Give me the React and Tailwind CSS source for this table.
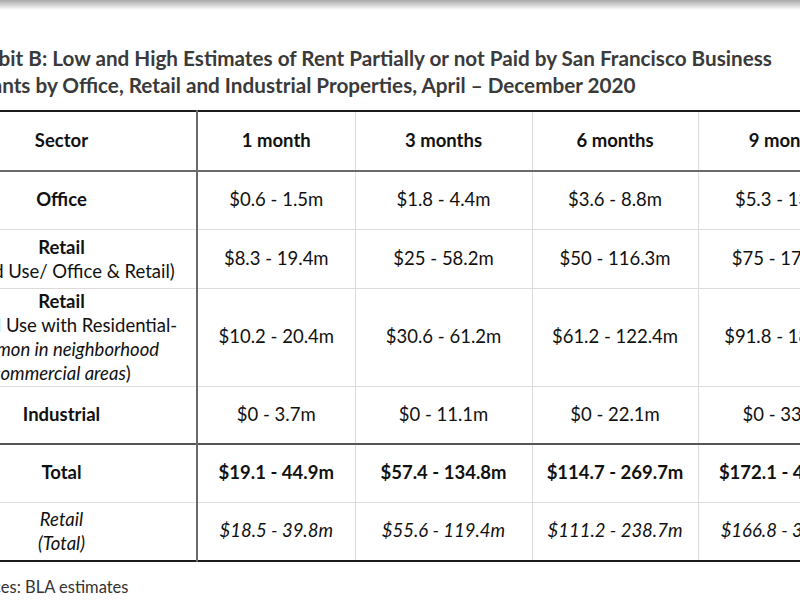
import React from "react";

const rows = [
  { key: "office", h: "h-[58px]", values: ["$0.6 - 1.5m", "$1.8 - 4.4m", "$3.6 - 8.8m", "$5.3 - 13.2m"] },
  { key: "retail", h: "h-[59px]", values: ["$8.3 - 19.4m", "$25 - 58.2m", "$50 - 116.3m", "$75 - 174.5m"] },
  { key: "mixed", h: "h-[98px]", values: ["$10.2 - 20.4m", "$30.6 - 61.2m", "$61.2 - 122.4m", "$91.8 - 183.6m"] },
  { key: "industrial", h: "h-[58px]", values: ["$0 - 3.7m", "$0 - 11.1m", "$0 - 22.1m", "$0 - 33.2m"] },
];

const totals = ["$19.1 - 44.9m", "$57.4 - 134.8m", "$114.7 - 269.7m", "$172.1 - 404.6m"];
const retailTotals = ["$18.5 - 39.8m", "$55.6 - 119.4m", "$111.2 - 238.7m", "$166.8 - 358.1m"];

const SectorCell = ({ k }) => {
  if (k === "office") return <span className="font-bold">Office</span>;
  if (k === "industrial") return <span className="font-bold">Industrial</span>;
  if (k === "retail")
    return (
      <div className="leading-[24px]">
        <div className="font-bold">Retail</div>
        <div className="whitespace-nowrap">(Mixed Use/ Office &amp; Retail)</div>
      </div>
    );
  return (
    <div className="leading-[24px]">
      <div className="font-bold">Retail</div>
      <div className="whitespace-nowrap">(Mixed Use with Residential-</div>
      <div className="whitespace-nowrap italic">common in neighborhood</div>
      <div className="whitespace-nowrap">
        <span className="italic">commercial areas</span>)
      </div>
    </div>
  );
};

export default function App() {
  return (
    <div
      className="w-[800px] h-[600px] overflow-hidden bg-white text-[#111]"
      style={{ fontFamily: "Lato, 'Open Sans', sans-serif" }}
    >
      <div className="h-[10px] bg-gradient-to-b from-[#a9a9a9] to-white" />

      <h1 className="-ml-[41px] mt-[35px] text-[20.7px] leading-[27px] font-bold text-[#3a3a3a] whitespace-nowrap">
        <div>Exhibit B: Low and High Estimates of Rent Partially or not Paid by San Francisco Business</div>
        <div>Tenants by Office, Retail and Industrial Properties, April – December 2020</div>
      </h1>

      <table className="-ml-[73px] mt-[11px] w-[949px] table-fixed border-collapse text-[18.5px] text-center">
        <colgroup>
          <col className="w-[270px]" />
          <col className="w-[158px]" />
          <col className="w-[177px]" />
          <col className="w-[166px]" />
          <col className="w-[178px]" />
        </colgroup>
        <thead>
          <tr className="h-[60px] border-t-2 border-t-[#1c1c1c] border-b-2 border-b-[#6a6a6a] font-bold">
            <th className="border-r-2 border-r-[#6a6a6a]">Sector</th>
            <th className="border-r border-r-[#dcdcdc]">1 month</th>
            <th className="border-r border-r-[#dcdcdc]">3 months</th>
            <th className="border-r border-r-[#dcdcdc]">6 months</th>
            <th>9 months</th>
          </tr>
        </thead>
        <tbody>
          {rows.map((r, i) => (
            <tr
              key={r.key}
              className={`${r.h} ${i === rows.length - 1 ? "border-b-2 border-b-[#555]" : "border-b border-b-[#dcdcdc]"}`}
            >
              <td className="border-r-2 border-r-[#6a6a6a]">
                <SectorCell k={r.key} />
              </td>
              {r.values.map((v, j) => (
                <td key={j} className={j < 3 ? "border-r border-r-[#dcdcdc]" : ""}>
                  {v}
                </td>
              ))}
            </tr>
          ))}
          <tr className="h-[58px] border-b border-b-[#dcdcdc] font-bold">
            <td className="border-r-2 border-r-[#6a6a6a]">Total</td>
            {totals.map((v, j) => (
              <td key={j} className={j < 3 ? "border-r border-r-[#dcdcdc]" : ""}>
                {v}
              </td>
            ))}
          </tr>
          <tr className="h-[59px] border-b-2 border-b-[#1c1c1c] italic">
            <td className="border-r-2 border-r-[#6a6a6a] leading-[24px]">
              <div>Retail</div>
              <div>(Total)</div>
            </td>
            {retailTotals.map((v, j) => (
              <td key={j} className={j < 3 ? "border-r border-r-[#dcdcdc]" : ""}>
                {v}
              </td>
            ))}
          </tr>
        </tbody>
      </table>

      <p className="-ml-[40px] mt-[13px] text-[16.5px] text-[#333]">Sources: BLA estimates</p>
    </div>
  );
}
